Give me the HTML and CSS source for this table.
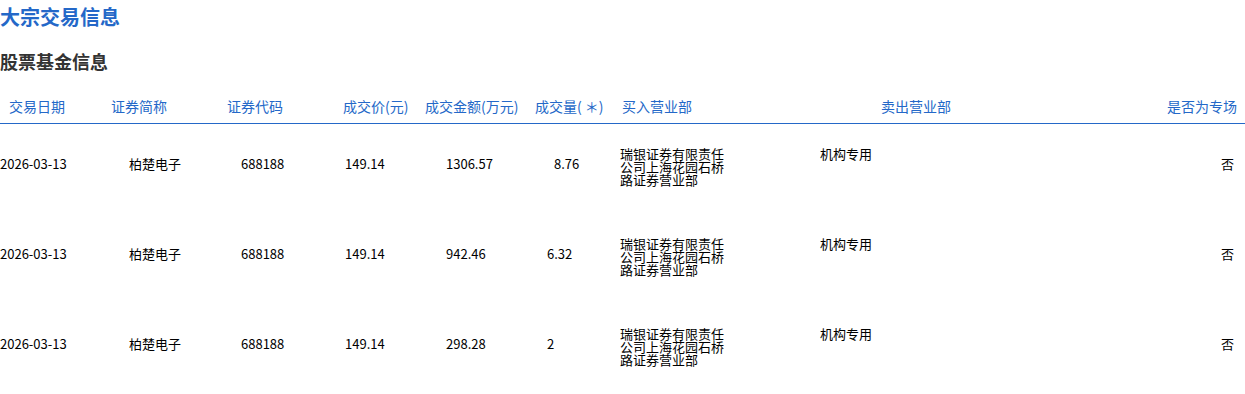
FILE: index.html
```html
<!DOCTYPE html>
<html lang="zh-CN">
<head>
<meta charset="utf-8">
<title>大宗交易信息</title>
<link rel="stylesheet" href="styles.css">
</head>
<body>
<h1 class="title">大宗交易信息</h1>
<h2 class="subtitle">股票基金信息</h2>
<div class="table">
  <div class="row head">
    <div class="c c1">交易日期</div>
    <div class="c c2">证券简称</div>
    <div class="c c3">证券代码</div>
    <div class="c c4">成交价(元)</div>
    <div class="c c5">成交金额(万元)</div>
    <div class="c c6">成交量( ＊)</div>
    <div class="c c7">买入营业部</div>
    <div class="c c8">卖出营业部</div>
    <div class="c c9">是否为专场</div>
  </div>
  <div class="row body">
    <div class="c c1">2026-03-13</div>
    <div class="c c2">柏楚电子</div>
    <div class="c c3">688188</div>
    <div class="c c4">149.14</div>
    <div class="c c5">1306.57</div>
    <div class="c c6 wide">8.76</div>
    <div class="c c7 top">瑞银证券有限责任<br>公司上海花园石桥<br>路证券营业部</div>
    <div class="c c8 top">机构专用</div>
    <div class="c c9">否</div>
  </div>
  <div class="row body">
    <div class="c c1">2026-03-13</div>
    <div class="c c2">柏楚电子</div>
    <div class="c c3">688188</div>
    <div class="c c4">149.14</div>
    <div class="c c5">942.46</div>
    <div class="c c6">6.32</div>
    <div class="c c7 top">瑞银证券有限责任<br>公司上海花园石桥<br>路证券营业部</div>
    <div class="c c8 top">机构专用</div>
    <div class="c c9">否</div>
  </div>
  <div class="row body">
    <div class="c c1">2026-03-13</div>
    <div class="c c2">柏楚电子</div>
    <div class="c c3">688188</div>
    <div class="c c4">149.14</div>
    <div class="c c5">298.28</div>
    <div class="c c6">2</div>
    <div class="c c7 top">瑞银证券有限责任<br>公司上海花园石桥<br>路证券营业部</div>
    <div class="c c8 top">机构专用</div>
    <div class="c c9">否</div>
  </div>
</div>
</body>
</html>
```

FILE: styles.css
```css
html, body {
  margin: 0;
  padding: 0;
  background: #ffffff;
}
body {
  font-family: "Noto Sans CJK SC", "Noto Sans", sans-serif;
  color: #000;
  width: 1245px;
}
.title {
  margin: 0;
  padding-top: 4px;
  font-size: 20px;
  line-height: 26px;
  font-weight: bold;
  color: #2468c8;
}
.subtitle {
  margin: 0;
  padding-top: 18px;
  font-size: 18px;
  line-height: 26px;
  font-weight: bold;
  color: #333333;
}
.table {
  margin-top: 18px;
}
.row {
  display: grid;
  grid-template-columns: 105px 115px 115px 85px 110px 85px 200px 285px 145px;
}
.head {
  height: 31px;
  border-bottom: 1px solid #2468c8;
  color: #2468c8;
  font-size: 14px;
  line-height: 28px;
}
.head .c1 { padding-left: 9px; }
.head .c2 { padding-left: 6px; }
.head .c3 { padding-left: 7px; }
.head .c4 { padding-left: 8px; }
.head .c5 { padding-left: 5px; }
.head .c6 { padding-left: 5px; }
.head .c7 { padding-left: 7px; }
.head .c8 { padding-left: 66px; }
.head .c9 { text-align: right; padding-right: 8px; }
.body {
  height: 90px;
  font-size: 13px;
  line-height: 13px;
  align-items: start;
}
.body .c {
  padding-top: 33px;
  white-space: nowrap;
}
.body .c.top {
  padding-top: 23px;
}
.body .c1 { padding-left: 0; }
.body .c2 { padding-left: 24px; }
.body .c3 { padding-left: 21px; }
.body .c4 { padding-left: 10px; }
.body .c5 { padding-left: 26px; }
.body .c6 { padding-left: 17px; }
.body .c6.wide { padding-left: 24px; }
.body .c7 { padding-left: 5px; }
.body .c8 { padding-left: 5px; }
.body .c9 { text-align: right; padding-right: 11px; }
```
